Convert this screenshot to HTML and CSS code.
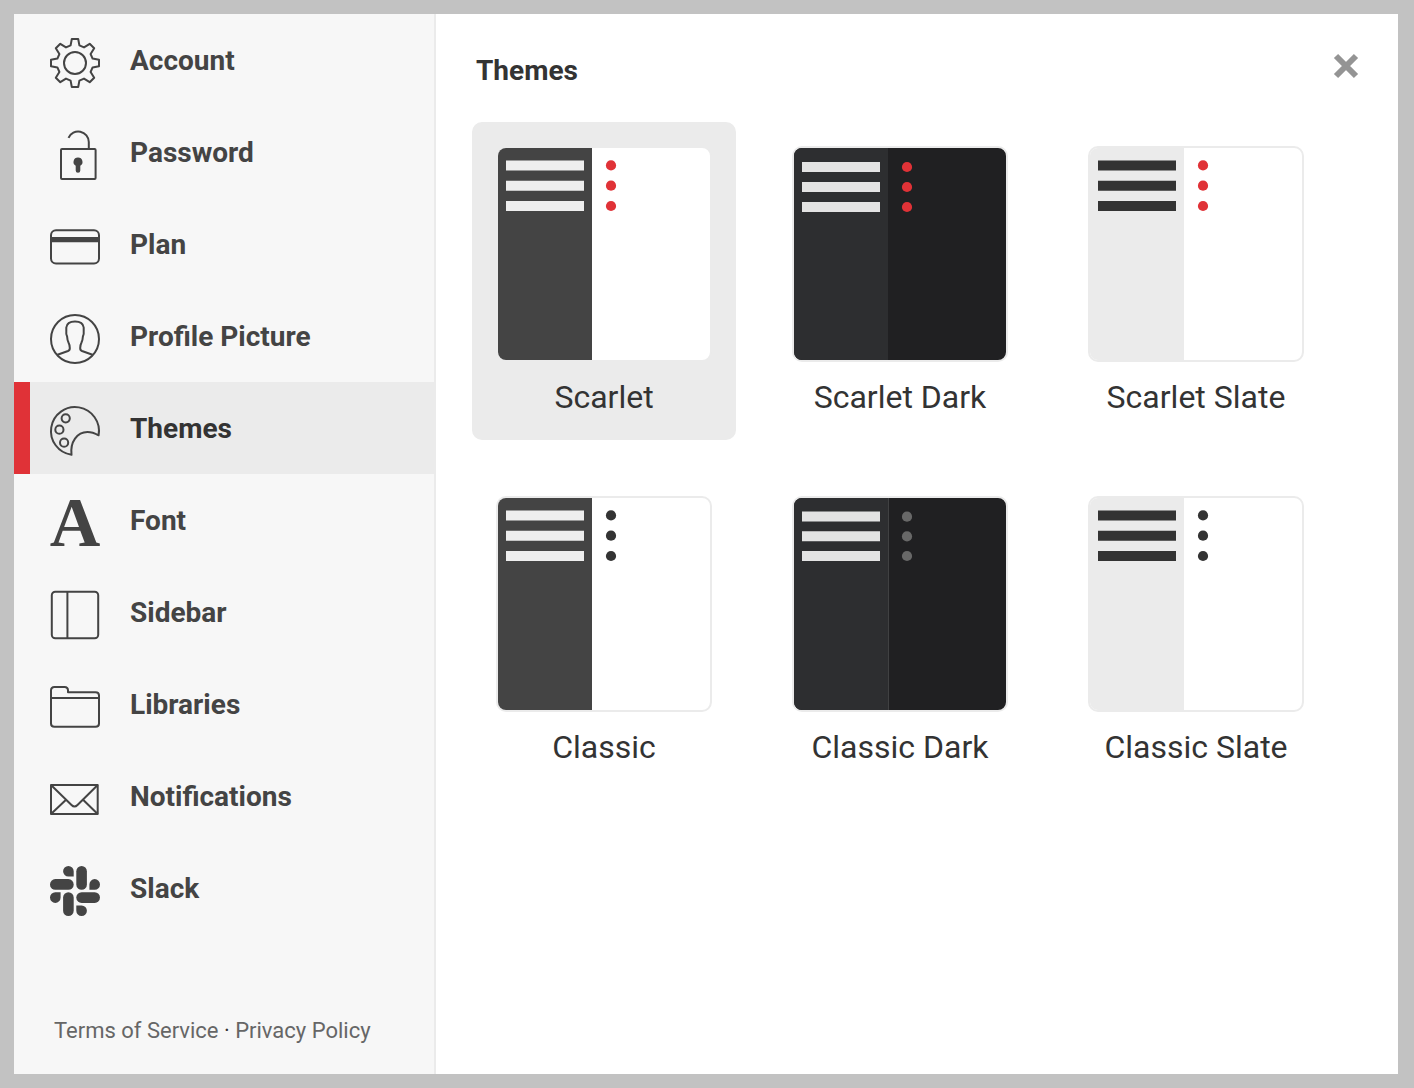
FILE: index.html
```html
<!DOCTYPE html>
<html lang="en">
<head>
<meta charset="utf-8">
<meta name="viewport" content="width=device-width, initial-scale=1">
<title>Settings – Themes</title>
<link rel="stylesheet" href="styles.css">
</head>
<body>
<div class="dialog" role="dialog" aria-labelledby="title">
  <aside class="sidebar">
    <nav class="menu">
      <a class="item" href="#account">
        <svg class="icon" viewBox="0 0 50 50" aria-hidden="true"><path d="M21.8 1H28.2L29.4 7.4L34 9.4L39.7 5.8L44.2 10.3L40.6 16L42.6 20.6L49 21.8V28.2L42.6 29.4L40.6 34L44.2 39.7L39.7 44.2L34 40.6L29.4 42.6L28.2 49H21.8L20.6 42.6L16 40.6L10.3 44.2L5.8 39.7L9.4 34L7.4 29.4L1 28.2V21.8L7.4 20.6L9.4 16L5.8 10.3L10.3 5.8L16 9.4L20.6 7.4Z"/><circle cx="25" cy="25" r="11"/></svg>
        <span>Account</span>
      </a>
      <a class="item" href="#password">
        <svg class="icon" viewBox="0 0 50 50" aria-hidden="true"><rect x="11" y="19" width="34.6" height="30" rx="1"/><path d="M18.5 7.8A10.6 10.6 0 0 1 38.8 12V19"/><path class="solid" d="M28 27.5a4.4 4.4 0 0 1 2.3 8.2V40.5a2.3 2.3 0 0 1-4.6 0V35.7A4.4 4.4 0 0 1 28 27.5Z"/></svg>
        <span>Password</span>
      </a>
      <a class="item" href="#plan">
        <svg class="icon" viewBox="0 0 50 50" aria-hidden="true"><rect x="1" y="8.3" width="48" height="33.2" rx="5"/><path class="solid" d="M1 15H49V20.3H1Z"/></svg>
        <span>Plan</span>
      </a>
      <a class="item" href="#picture">
        <svg class="icon" viewBox="0 0 50 50" aria-hidden="true"><circle cx="25" cy="25" r="24"/><path d="M7.5 40.7L18 37Q20 36.2 19.8 34Q19.8 31 18.5 28.5Q17.3 26 17.1 22.5Q15.9 20 16.3 17V13.5Q17 7.5 25 7.5Q33 7.5 33.7 13.5V17Q34.1 20 32.9 22.5Q32.7 26 31.5 28.5Q30.2 31 30.2 34Q30 36.2 32 37L42.5 40.7"/></svg>
        <span>Profile Picture</span>
      </a>
      <a class="item current" href="#themes" aria-current="page">
        <svg class="icon" viewBox="0 0 50 50" aria-hidden="true"><path d="M48.6 29.3A24 24 0 1 0 21.5 48.8C20 36 27 26 37.5 26Q42.5 26 48.6 29.3Z"/><circle cx="15.7" cy="12.3" r="4.1"/><circle cx="9.4" cy="23.7" r="4.1"/><circle cx="14.1" cy="36.7" r="4.1"/></svg>
        <span>Themes</span>
      </a>
      <a class="item" href="#font">
        <svg class="icon" viewBox="0 0 50 50" aria-hidden="true"><text class="letter" x="25" y="48">A</text></svg>
        <span>Font</span>
      </a>
      <a class="item" href="#sidebar">
        <svg class="icon" viewBox="0 0 50 50" aria-hidden="true"><rect x="1.8" y="1.8" width="46.4" height="46.4" rx="3.5"/><path d="M17.4 2V48"/></svg>
        <span>Sidebar</span>
      </a>
      <a class="item" href="#libraries">
        <svg class="icon" viewBox="0 0 50 50" aria-hidden="true"><path d="M1 8.5Q1 5 4.5 5H14.5Q18 5 18 8.5V10.2H45.5Q49 10.2 49 13.5V41.5Q49 44.8 45.5 44.8H4.5Q1 44.8 1 41.5ZM1 16H49"/></svg>
        <span>Libraries</span>
      </a>
      <a class="item" href="#notifications">
        <svg class="icon" viewBox="0 0 50 50" aria-hidden="true"><rect x="1" y="11" width="46.7" height="29"/><path d="M1 11L21.5 31Q24.5 34 27.5 31L47.7 11M1 40L16.3 25.5M47.7 40L32.8 25.5"/></svg>
        <span>Notifications</span>
      </a>
      <a class="item" href="#slack">
        <svg class="icon" viewBox="0 0 50 50" aria-hidden="true"><g class="solid"><rect x="0" y="13.1" width="23.7" height="10.6" rx="5.3"/><rect x="26.3" y="0" width="10.6" height="23.7" rx="5.3"/><rect x="26.3" y="26.3" width="23.7" height="10.6" rx="5.3"/><rect x="13.1" y="26.3" width="10.6" height="23.7" rx="5.3"/><path d="M23.7 10.6H18.4A5.3 5.3 0 1 1 23.7 5.3ZM39.4 23.7V18.4A5.3 5.3 0 1 1 44.7 23.7ZM10.6 26.3V31.6A5.3 5.3 0 1 1 5.3 26.3ZM26.3 39.4H31.6A5.3 5.3 0 1 1 26.3 44.7Z"/></g></svg>
        <span>Slack</span>
      </a>
    </nav>
    <footer class="legal"><a href="#terms">Terms of Service</a> · <a href="#privacy">Privacy Policy</a></footer>
  </aside>

  <main class="panel">
    <header class="heading">
      <h1 id="title">Themes</h1>
      <button class="close" type="button" aria-label="Close">
        <svg viewBox="0 0 32 32" aria-hidden="true"><path d="M6 6L26 26M26 6L6 26"/></svg>
      </button>
    </header>

    <div class="themes">
      <button class="theme selected" type="button" aria-pressed="true">
        <svg class="swatch scarlet" viewBox="0 0 212 212" aria-hidden="true"><path class="side" d="M0 0H94V212H0Z"/><path class="bars" d="M8 17.4H86M8 37.7H86M8 58H86"/><g class="dots"><circle cx="113" cy="17.4" r="5.1"/><circle cx="113" cy="37.7" r="5.1"/><circle cx="113" cy="58" r="5.1"/></g></svg>
        <span>Scarlet</span>
      </button>
      <button class="theme" type="button" aria-pressed="false">
        <svg class="swatch dark scarlet" viewBox="0 0 212 212" aria-hidden="true"><path class="side" d="M0 0H94V212H0Z"/><path class="bars" d="M8 19H86M8 39H86M8 59H86"/><g class="dots"><circle cx="113" cy="19" r="5.1"/><circle cx="113" cy="39" r="5.1"/><circle cx="113" cy="59" r="5.1"/></g></svg>
        <span>Scarlet Dark</span>
      </button>
      <button class="theme" type="button" aria-pressed="false">
        <svg class="swatch slate scarlet" viewBox="0 0 212 212" aria-hidden="true"><path class="side" d="M0 0H94V212H0Z"/><path class="bars" d="M8 17.4H86M8 37.7H86M8 58H86"/><g class="dots"><circle cx="113" cy="17.4" r="5.1"/><circle cx="113" cy="37.7" r="5.1"/><circle cx="113" cy="58" r="5.1"/></g></svg>
        <span>Scarlet Slate</span>
      </button>
      <button class="theme" type="button" aria-pressed="false">
        <svg class="swatch" viewBox="0 0 212 212" aria-hidden="true"><path class="side" d="M0 0H94V212H0Z"/><path class="bars" d="M8 17.4H86M8 37.7H86M8 58H86"/><g class="dots"><circle cx="113" cy="17.4" r="5.1"/><circle cx="113" cy="37.7" r="5.1"/><circle cx="113" cy="58" r="5.1"/></g></svg>
        <span>Classic</span>
      </button>
      <button class="theme" type="button" aria-pressed="false">
        <svg class="swatch dark" viewBox="0 0 212 212" aria-hidden="true"><path class="side" d="M0 0H94V212H0Z"/><path class="divider" d="M94 0H95V212H94Z"/><path class="bars" d="M8 18.6H86M8 38.3H86M8 58H86"/><g class="dots"><circle cx="113" cy="18.7" r="5.1"/><circle cx="113" cy="38.4" r="5.1"/><circle cx="113" cy="58" r="5.1"/></g></svg>
        <span>Classic Dark</span>
      </button>
      <button class="theme" type="button" aria-pressed="false">
        <svg class="swatch slate" viewBox="0 0 212 212" aria-hidden="true"><path class="side" d="M0 0H94V212H0Z"/><path class="bars" d="M8 17.4H86M8 37.7H86M8 58H86"/><g class="dots"><circle cx="113" cy="17.4" r="5.1"/><circle cx="113" cy="37.7" r="5.1"/><circle cx="113" cy="58" r="5.1"/></g></svg>
        <span>Classic Slate</span>
      </button>
    </div>
  </main>
</div>
</body>
</html>
```
FILE: styles.css
```css
* {
  box-sizing: border-box;
}

body {
  margin: 0;
  min-height: 100vh;
  padding: 14px 16px 14px 14px;
  display: flex;
  background: #c2c2c2;
  color: #333;
  font-family: Roboto, "Liberation Sans", sans-serif;
}

.dialog {
  flex: 1;
  display: flex;
  background: #fff;
}

/* Navigation */

.sidebar {
  flex: none;
  width: 422px;
  display: flex;
  flex-direction: column;
  justify-content: space-between;
  background: #f7f7f7;
  border-right: 2px solid #ebebeb;
}

.item {
  display: flex;
  align-items: flex-start;
  gap: 30px;
  padding: 24px 20px 18px;
  border-left: 16px solid transparent;
  color: #444;
  font-size: 28px;
  font-weight: 700;
  line-height: 46px;
  text-decoration: none;
}

.item.current {
  background: #ebebeb;
  border-left-color: #e03237;
  color: #333;
}

.icon {
  flex: none;
  width: 50px;
  height: 50px;
  overflow: visible;
  fill: none;
  stroke: #444;
  stroke-width: 2;
  stroke-linejoin: round;
}

.icon .solid {
  fill: #444;
  stroke: none;
}

.icon .letter {
  fill: #444;
  stroke: none;
  font: 700 70px/1 "Liberation Serif", serif;
  text-anchor: middle;
}

.legal {
  padding: 24px 40px 28px;
  font-size: 22px;
  line-height: 30px;
}

.legal a {
  color: #666;
  text-decoration: none;
}

/* Theme picker */

.panel {
  flex: 1;
  padding: 36px;
}

.heading {
  display: flex;
  align-items: flex-start;
  justify-content: space-between;
  margin-bottom: 30px;
  padding-left: 4px;
}

.heading h1 {
  margin: 0;
  font-size: 28px;
  font-weight: 700;
  line-height: 42px;
}

.close {
  width: 32px;
  height: 32px;
  padding: 0;
  border: 0;
  background: none;
  cursor: pointer;
}

.close svg {
  display: block;
  stroke: #949494;
  stroke-width: 6;
}

.themes {
  display: grid;
  grid-template-columns: repeat(auto-fill, 264px);
  gap: 32px;
}

.theme {
  display: flex;
  flex-direction: column;
  align-items: center;
  gap: 16px;
  padding: 24px;
  border: 0;
  border-radius: 10px;
  background: none;
  color: #333;
  font: 400 32px/38px Roboto, "Liberation Sans", sans-serif;
  cursor: pointer;
}

.theme.selected {
  background: #ebebeb;
}

.swatch {
  width: 216px;
  height: 216px;
  border: 2px solid #ebebeb;
  border-radius: 10px;
  background: #fff;
}

.side {
  fill: #444;
}

.bars {
  stroke: #eee;
  stroke-width: 10;
}

.dots {
  fill: #333;
}

.dark {
  background: #202022;
}

.dark .side {
  fill: #2d2e30;
}

.dark .divider {
  fill: #404142;
}

.dark .bars {
  stroke: #e3e3e3;
}

.dark .dots {
  fill: #686868;
}

.slate .side {
  fill: #ebebeb;
}

.slate .bars {
  stroke: #333;
}

.swatch.scarlet .dots {
  fill: #e03237;
}
```
